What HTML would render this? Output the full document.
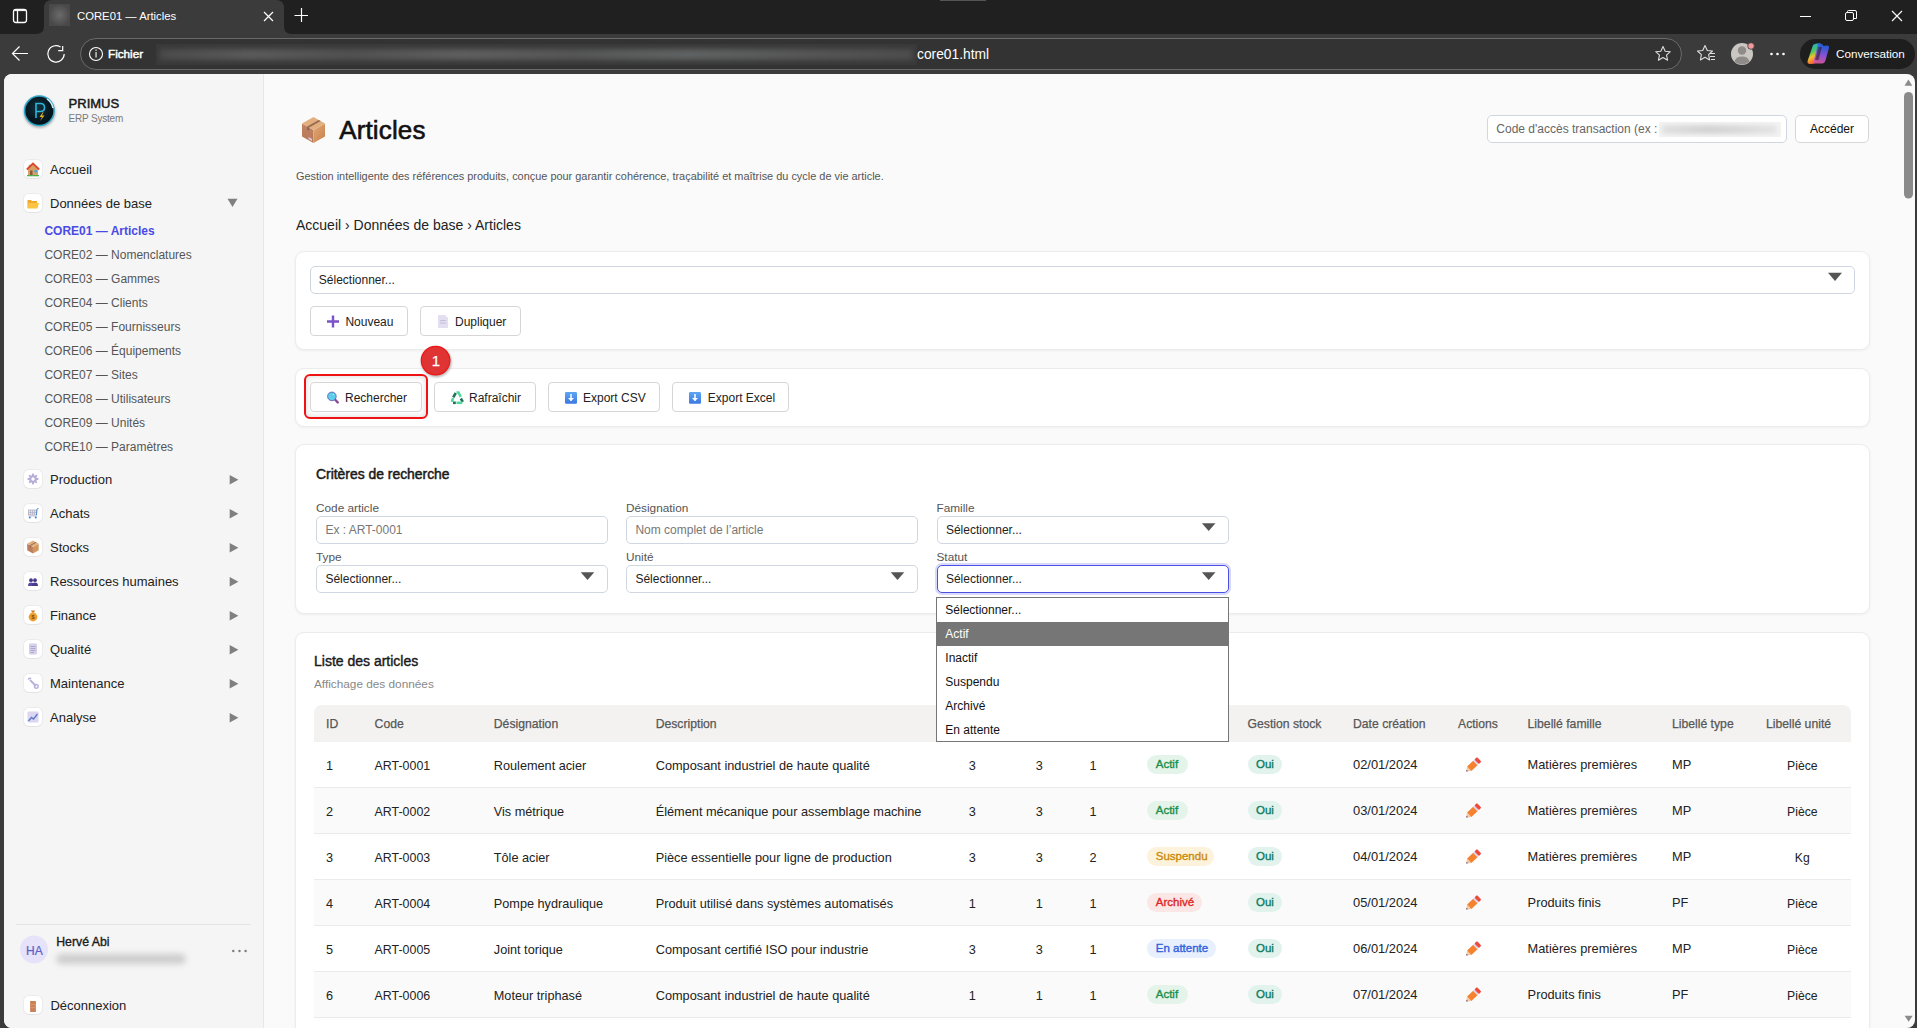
<!DOCTYPE html>
<html><head><meta charset="utf-8">
<style>
*{box-sizing:border-box;margin:0;padding:0}
html,body{width:1917px;height:1028px;overflow:hidden;background:#3b3b3b;font-family:"Liberation Sans",sans-serif;position:relative}
.abs{position:absolute}
.t{position:absolute;white-space:nowrap;line-height:1}
svg{position:absolute;overflow:visible}
</style></head><body>

<div class="abs" style="left:0px;top:0px;width:1917px;height:34px;background:#202020"></div>
<div class="abs" style="left:0px;top:34px;width:1917px;height:40px;background:#3b3b3b"></div>
<svg style="left:0;top:0" width="1917" height="74">
<rect x="13.5" y="9.5" width="13" height="13" rx="2.5" fill="none" stroke="#fff" stroke-width="1.3"/>
<line x1="17.5" y1="10" x2="17.5" y2="22" stroke="#fff" stroke-width="1.3"/><line x1="15" y1="10.6" x2="25" y2="10.6" stroke="#fff" stroke-width="1"/>
<path d="M36 34 Q44 34 44 26 L44 8 Q44 0 52 0 L276 0 Q284 0 284 8 L284 26 Q284 34 292 34 Z" fill="#3b3b3b"/>
<defs><radialGradient id="fav"><stop offset="0" stop-color="#6a6a6a"/><stop offset="1" stop-color="#4a4a4a"/></radialGradient>
<filter id="bl"><feGaussianBlur stdDeviation="0.7"/></filter></defs>
<rect x="49" y="4" width="21" height="22" rx="1" fill="url(#fav)" filter="url(#bl)"/>
<path d="M264 12 L273 21 M273 12 L264 21" stroke="#fff" stroke-width="1.2"/>
<path d="M301.5 8 L301.5 22 M294.5 15.5 L308 15.5" stroke="#fff" stroke-width="1.2"/>
<path d="M1800 16.5 L1811 16.5" stroke="#fff" stroke-width="1"/>
<rect x="1845.5" y="12.5" width="8" height="8" rx="1.5" fill="none" stroke="#fff" stroke-width="1"/>
<path d="M1847.5 12.5 L1847.5 11.5 Q1847.5 10.5 1848.5 10.5 L1855 10.5 Q1856.5 10.5 1856.5 12 L1856.5 18.5 L1854 18.5" fill="none" stroke="#fff" stroke-width="1"/>
<path d="M1892 11 L1902 21 M1902 11 L1892 21" stroke="#fff" stroke-width="1.1"/>
<rect x="940" y="0" width="46" height="1" fill="#555"/>
<g transform="translate(0,34)">
<path d="M12.5 19.5 L28 19.5 M19.5 12.5 L12.5 19.5 L19.5 26.5" fill="none" stroke="#fff" stroke-width="1.2"/>
<path d="M64.2 20 A8.2 8.2 0 1 1 60.5 13" fill="none" stroke="#fff" stroke-width="1.2"/>
<path d="M58.2 16.6 L62.7 16.6 L62.7 12" fill="none" stroke="#fff" stroke-width="1.2"/>
<rect x="80.5" y="4.5" width="1601" height="31" rx="15.5" fill="#333" stroke="#6a6a6a" stroke-width="1"/>
<circle cx="96" cy="20" r="6.5" fill="none" stroke="#fff" stroke-width="1.1"/>
<rect x="95.4" y="18" width="1.3" height="5.5" fill="#ddd"/>
<rect x="95.4" y="15.5" width="1.3" height="1.4" fill="#ddd"/>
<path d="M1663 12.5 L1665.2 17.2 L1670.3 17.7 L1666.5 21.1 L1667.6 26.2 L1663 23.5 L1658.4 26.2 L1659.5 21.1 L1655.7 17.7 L1660.8 17.2 Z" fill="none" stroke="#ddd" stroke-width="1.1" stroke-linejoin="round"/>
<path d="M1705 11.5 L1707.3 16.5 L1712.5 17 L1708.6 20.6 L1709.6 26 L1705 23.3 L1700.4 26 L1701.4 20.6 L1697.5 17 L1702.7 16.5 Z" fill="none" stroke="#ddd" stroke-width="1.1" stroke-linejoin="round"/>
<path d="M1710 19.5 L1715 19.5 M1710 22.5 L1715 22.5 M1711 25.5 L1715 25.5" stroke="#ddd" stroke-width="1.1"/>
<circle cx="1742" cy="20" r="11" fill="#cac6c2"/>
<circle cx="1742" cy="16.5" r="4.2" fill="#8f8b88"/>
<path d="M1734.5 27.8 Q1735.5 22.5 1742 22.5 Q1748.5 22.5 1749.5 27.8 Q1742 33 1734.5 27.8 Z" fill="#8f8b88"/>
<circle cx="1751" cy="12" r="3.3" fill="#f29a9a" stroke="#3b3b3b" stroke-width="0.8"/>
<circle cx="1771.5" cy="20" r="1.3" fill="#fff"/><circle cx="1777.5" cy="20" r="1.3" fill="#fff"/><circle cx="1783.5" cy="20" r="1.3" fill="#fff"/>
<rect x="1800" y="5" width="115" height="30" rx="15" fill="#1e1e1e"/>
<defs>
<linearGradient id="cop" x1="0" y1="0" x2="0.3" y2="1"><stop offset="0" stop-color="#1f9ef5"/><stop offset="0.45" stop-color="#46c85e"/><stop offset="0.7" stop-color="#f2c22c"/><stop offset="1" stop-color="#f2603a"/></linearGradient>
<linearGradient id="cop2" x1="0" y1="0" x2="-0.2" y2="1"><stop offset="0" stop-color="#2a5fe8"/><stop offset="0.5" stop-color="#9b56e0"/><stop offset="1" stop-color="#f05a8a"/></linearGradient>
</defs>
<path d="M1813 11 Q1814.5 9.5 1817 9.5 L1820.5 9.5 L1815.5 27.5 Q1814.8 30 1812 30 L1810 30 Q1807 30 1807.6 27 Z" fill="url(#cop)"/>
<path d="M1823.5 12 Q1822.8 9.5 1820 9.5 L1818 9.5 L1813 29.5 L1822 29.5 Q1824.5 29.5 1825.3 27 L1829 14 Q1829.5 11.5 1827 11.5 Z" fill="url(#cop2)" opacity="0.92"/>
<path d="M1818.5 13 L1822 13 L1818.5 26 L1815 26 Z" fill="#1e1e1e" opacity="0.55"/>
</g>
</svg>
<div class="t" style="left:77px;top:11.18px;font-size:11.3px;color:#fff;font-weight:normal;">CORE01 — Articles</div>
<div class="t" style="left:108px;top:48.10px;font-size:11.7px;color:#fff;font-weight:normal;-webkit-text-stroke:0.45px #fff;">Fichier</div>
<div class="abs" style="left:156px;top:44px;width:761px;height:21px;background:#393939"></div>
<div class="abs" style="left:160px;top:49px;width:753px;height:11px;background:linear-gradient(90deg,#4a4a4a,#5a5a5a 12%,#505050 25%,#5e5e5e 40%,#555 55%,#5f6262 70%,#565656 85%,#4c4c4c);filter:blur(2.5px)"></div>
<div class="t" style="left:917px;top:47.92px;font-size:13.8px;color:#fff;font-weight:normal;">core01.html</div>
<div class="t" style="left:1836px;top:48.10px;font-size:11.7px;color:#fff;font-weight:normal;">Conversation</div>
<div class="abs" style="left:4px;top:74px;width:1911px;height:954px;background:#fafafa;border-radius:8px 8px 8px 8px;overflow:hidden"></div>
<div class="abs" style="left:4px;top:74px;width:260px;height:954px;background:#f5f5f5;border-right:1px solid #e9e7e5;border-radius:8px 0 0 8px"></div>
<svg style="left:0;top:0" width="270" height="1028">
<defs>
<radialGradient id="lg" cx="0.45" cy="0.4" r="0.6"><stop offset="0" stop-color="#123240"/><stop offset="0.7" stop-color="#071820"/><stop offset="1" stop-color="#04121a"/></radialGradient>
<filter id="sh" x="-50%" y="-50%" width="200%" height="200%"><feGaussianBlur stdDeviation="1"/></filter>
</defs>
<circle cx="39.5" cy="112" r="16" fill="#000" opacity="0.25" filter="url(#sh)"/>
<circle cx="39.3" cy="110.8" r="15.5" fill="#2fa8c8"/>
<circle cx="39.3" cy="110.8" r="14" fill="url(#lg)"/>
<path d="M47 99 A14 14 0 0 1 53 108" stroke="#cdeff7" stroke-width="1.5" fill="none"/>
<path d="M36 118 L36 103.5 L40.5 103.5 Q44.5 103.5 44.5 107.5 Q44.5 111.5 40.5 111.5 L36 111.5" fill="none" stroke="#2bb6d8" stroke-width="1.6"/>
<path d="M43 112 L39.5 117 L42 117 L40 121 L44.5 115.5 L42 115.5 L43.5 112 Z" fill="#e8b422"/>
</svg>
<div class="t" style="left:68.6px;top:96.70px;font-size:13px;color:#1a1a1a;font-weight:normal;-webkit-text-stroke:0.5px #1a1a1a;">PRIMUS</div>
<div class="t" style="left:68.6px;top:114.13px;font-size:10px;color:#7a7a7a;font-weight:normal;letter-spacing:-0.2px">ERP System</div>
<div class="abs" style="left:24px;top:160px;width:18px;height:18px;background:#fff;border-radius:5px;box-shadow:0 0 0 1px rgba(0,0,0,0.04),0 1px 1px rgba(0,0,0,0.03)"></div>
<svg style="left:24px;top:160px" width="18" height="18">
<rect x="4.8" y="4.8" width="1.8" height="4" fill="#c89060"/><path d="M4 9 L9 4.5 L14 9 L14 15 L4 15 Z" fill="#d9a066"/>
<path d="M2.8 9.5 L9 3.5 L15.2 9.5" fill="none" stroke="#d84a2f" stroke-width="1.8"/>
<rect x="6" y="10.5" width="2.5" height="4.5" fill="#8a5a3a"/>
<rect x="10.5" y="10" width="2.5" height="2.5" fill="#4aa8e0"/>
<rect x="3" y="15" width="12" height="1.3" fill="#4caf50"/>
</svg>
<div class="t" style="left:50px;top:162.75px;font-size:13px;color:#222;font-weight:normal;">Accueil</div>
<div class="abs" style="left:24px;top:194px;width:18px;height:18px;background:#fff;border-radius:5px;box-shadow:0 0 0 1px rgba(0,0,0,0.04),0 1px 1px rgba(0,0,0,0.03)"></div>
<svg style="left:24px;top:194px" width="18" height="18">
<path d="M3.5 6 L7 6 L8 7 L13 7 L13 14 L3.5 14 Z" fill="#f0a830"/>
<path d="M4.5 9 L15 9 L13.5 14.5 L3.5 14.5 Z" fill="#fcc445"/>
</svg>
<div class="t" style="left:50px;top:196.75px;font-size:13px;color:#222;font-weight:normal;">Données de base</div>
<svg style="left:0;top:0" width="260" height="230"><path d="M227.5 198.8 L237.5 198.8 L232.5 207 Z" fill="#808080"/></svg>
<div class="t" style="left:44.4px;top:224.84px;font-size:12px;color:#4a4ae6;font-weight:bold;">CORE01 — Articles</div>
<div class="t" style="left:44.4px;top:248.84px;font-size:12px;color:#555;font-weight:normal;">CORE02 — Nomenclatures</div>
<div class="t" style="left:44.4px;top:272.84px;font-size:12px;color:#555;font-weight:normal;">CORE03 — Gammes</div>
<div class="t" style="left:44.4px;top:296.84px;font-size:12px;color:#555;font-weight:normal;">CORE04 — Clients</div>
<div class="t" style="left:44.4px;top:320.84px;font-size:12px;color:#555;font-weight:normal;">CORE05 — Fournisseurs</div>
<div class="t" style="left:44.4px;top:344.84px;font-size:12px;color:#555;font-weight:normal;">CORE06 — Équipements</div>
<div class="t" style="left:44.4px;top:368.84px;font-size:12px;color:#555;font-weight:normal;">CORE07 — Sites</div>
<div class="t" style="left:44.4px;top:392.84px;font-size:12px;color:#555;font-weight:normal;">CORE08 — Utilisateurs</div>
<div class="t" style="left:44.4px;top:416.84px;font-size:12px;color:#555;font-weight:normal;">CORE09 — Unités</div>
<div class="t" style="left:44.4px;top:440.84px;font-size:12px;color:#555;font-weight:normal;">CORE10 — Paramètres</div>
<div class="abs" style="left:24px;top:470px;width:18px;height:18px;background:#fff;border-radius:5px;box-shadow:0 0 0 1px rgba(0,0,0,0.04),0 1px 1px rgba(0,0,0,0.03)"></div>
<svg style="left:24px;top:470px" width="18" height="18"><g fill="#b8acd8"><circle cx="9" cy="9" r="3.8"/><rect x="8" y="3.6" width="2" height="10.8" rx="0.6"/><rect x="3.6" y="8" width="10.8" height="2" rx="0.6"/><rect x="8" y="3.6" width="2" height="10.8" rx="0.6" transform="rotate(45 9 9)"/><rect x="8" y="3.6" width="2" height="10.8" rx="0.6" transform="rotate(-45 9 9)"/></g><circle cx="9" cy="9" r="1.7" fill="#fff"/></svg>
<div class="t" style="left:50px;top:472.60px;font-size:13px;color:#222;font-weight:normal;">Production</div>
<svg style="left:0;top:0" width="260" height="1028"><path d="M229.7 475 L229.7 484.5 L238.4 479.75 Z" fill="#808080"/></svg>
<div class="abs" style="left:24px;top:504px;width:18px;height:18px;background:#fff;border-radius:5px;box-shadow:0 0 0 1px rgba(0,0,0,0.04),0 1px 1px rgba(0,0,0,0.03)"></div>
<svg style="left:24px;top:504px" width="18" height="18"><rect x="4.5" y="6" width="8" height="5" fill="#e6e6ee" stroke="#a8a8b8" stroke-width="0.7"/><path d="M6.5 6 L6.5 11 M8.5 6 L8.5 11 M10.5 6 L10.5 11 M4.5 8.5 L12.5 8.5" stroke="#a8a8b8" stroke-width="0.6"/><path d="M12.5 11 L13 5 L14.5 4.5" fill="none" stroke="#3a80d8" stroke-width="0.9"/><path d="M4.5 12 L13 12" stroke="#c0b8d8" stroke-width="0.9"/><circle cx="5.8" cy="13.4" r="1" fill="#3a80d8"/><circle cx="11.8" cy="13.4" r="1" fill="#3a80d8"/></svg>
<div class="t" style="left:50px;top:506.60px;font-size:13px;color:#222;font-weight:normal;">Achats</div>
<svg style="left:0;top:0" width="260" height="1028"><path d="M229.7 509 L229.7 518.5 L238.4 513.75 Z" fill="#808080"/></svg>
<div class="abs" style="left:24px;top:538px;width:18px;height:18px;background:#fff;border-radius:5px;box-shadow:0 0 0 1px rgba(0,0,0,0.04),0 1px 1px rgba(0,0,0,0.03)"></div>
<svg style="left:24px;top:538px" width="18" height="18"><g transform="translate(3.2,2.6) scale(0.5)"><path d="M0 6.5 L11.5 13 L11.5 26 L0 19.5 Z" fill="#bc7e5c"/><path d="M11.5 13 L23 6.5 L23 19.5 L11.5 26 Z" fill="#d4955e"/><path d="M0 6.5 L11.5 0 L23 6.5 L11.5 13 Z" fill="#e2b07e"/><path d="M5.2 9.4 L16.7 2.9 L18.7 4 L7.2 10.5 Z" fill="#9c6a52"/><path d="M5.2 9.4 L7.2 10.5 L7.2 13.8 L5.2 12.7 Z" fill="#8a6458"/></g></svg>
<div class="t" style="left:50px;top:540.60px;font-size:13px;color:#222;font-weight:normal;">Stocks</div>
<svg style="left:0;top:0" width="260" height="1028"><path d="M229.7 543 L229.7 552.5 L238.4 547.75 Z" fill="#808080"/></svg>
<div class="abs" style="left:24px;top:572px;width:18px;height:18px;background:#fff;border-radius:5px;box-shadow:0 0 0 1px rgba(0,0,0,0.04),0 1px 1px rgba(0,0,0,0.03)"></div>
<svg style="left:24px;top:572px" width="18" height="18"><circle cx="7" cy="8.2" r="1.9" fill="#4a3a8a"/><circle cx="11" cy="8.2" r="1.9" fill="#4a3a8a"/><path d="M4 14 Q4 10.6 7 10.6 Q10 10.6 10 14 Z" fill="#5a48a0"/><path d="M8 14 Q8 10.6 11 10.6 Q14 10.6 14 14 Z" fill="#4a3a8a"/></svg>
<div class="t" style="left:50px;top:574.60px;font-size:13px;color:#222;font-weight:normal;">Ressources humaines</div>
<svg style="left:0;top:0" width="260" height="1028"><path d="M229.7 577 L229.7 586.5 L238.4 581.75 Z" fill="#808080"/></svg>
<div class="abs" style="left:24px;top:606px;width:18px;height:18px;background:#fff;border-radius:5px;box-shadow:0 0 0 1px rgba(0,0,0,0.04),0 1px 1px rgba(0,0,0,0.03)"></div>
<svg style="left:24px;top:606px" width="18" height="18"><path d="M7 4.5 L11 4.5 L10 6.5 L8 6.5 Z" fill="#c87a20"/><circle cx="9" cy="11" r="4.4" fill="#f0a030"/><text x="9" y="13.2" font-size="6" text-anchor="middle" fill="#7a4a10" font-family="Liberation Sans" font-weight="bold">$</text></svg>
<div class="t" style="left:50px;top:608.60px;font-size:13px;color:#222;font-weight:normal;">Finance</div>
<svg style="left:0;top:0" width="260" height="1028"><path d="M229.7 611 L229.7 620.5 L238.4 615.75 Z" fill="#808080"/></svg>
<div class="abs" style="left:24px;top:640px;width:18px;height:18px;background:#fff;border-radius:5px;box-shadow:0 0 0 1px rgba(0,0,0,0.04),0 1px 1px rgba(0,0,0,0.03)"></div>
<svg style="left:24px;top:640px" width="18" height="18"><rect x="5" y="3.5" width="8" height="11" rx="1" fill="#d6d0ea"/><path d="M6.5 6.5 L11.5 6.5 M6.5 8.5 L11.5 8.5 M6.5 10.5 L11.5 10.5 M6.5 12.5 L10 12.5" stroke="#a89cc8" stroke-width="0.8"/></svg>
<div class="t" style="left:50px;top:642.60px;font-size:13px;color:#222;font-weight:normal;">Qualité</div>
<svg style="left:0;top:0" width="260" height="1028"><path d="M229.7 645 L229.7 654.5 L238.4 649.75 Z" fill="#808080"/></svg>
<div class="abs" style="left:24px;top:674px;width:18px;height:18px;background:#fff;border-radius:5px;box-shadow:0 0 0 1px rgba(0,0,0,0.04),0 1px 1px rgba(0,0,0,0.03)"></div>
<svg style="left:24px;top:674px" width="18" height="18"><path d="M6.5 6.5 L11.5 11.5" stroke="#b8b0d8" stroke-width="1.8" stroke-linecap="round"/><path d="M4.2 5.5 A2.3 2.3 0 0 1 7.2 4.6" fill="none" stroke="#b8b0d8" stroke-width="1.5"/><circle cx="12.3" cy="12.3" r="1.9" fill="none" stroke="#b8b0d8" stroke-width="1.4"/></svg>
<div class="t" style="left:50px;top:676.60px;font-size:13px;color:#222;font-weight:normal;">Maintenance</div>
<svg style="left:0;top:0" width="260" height="1028"><path d="M229.7 679 L229.7 688.5 L238.4 683.75 Z" fill="#808080"/></svg>
<div class="abs" style="left:24px;top:708px;width:18px;height:18px;background:#fff;border-radius:5px;box-shadow:0 0 0 1px rgba(0,0,0,0.04),0 1px 1px rgba(0,0,0,0.03)"></div>
<svg style="left:24px;top:708px" width="18" height="18"><rect x="3.5" y="3.5" width="11" height="11" rx="1" fill="#dcd6f0"/><path d="M4.5 13 L7.5 9.5 L9.5 11 L13.5 6" fill="none" stroke="#5a78c8" stroke-width="1.3"/></svg>
<div class="t" style="left:50px;top:710.60px;font-size:13px;color:#222;font-weight:normal;">Analyse</div>
<svg style="left:0;top:0" width="260" height="1028"><path d="M229.7 713 L229.7 722.5 L238.4 717.75 Z" fill="#808080"/></svg>
<div class="abs" style="left:16px;top:924px;width:235px;height:1px;background:#e4e4e4"></div>
<svg style="left:0;top:0" width="260" height="1028"><circle cx="34" cy="949.5" r="14" fill="#e6e2fa"/><circle cx="233.3" cy="951" r="1.2" fill="#7a7a7a"/><circle cx="239.5" cy="951" r="1.2" fill="#7a7a7a"/><circle cx="245.6" cy="951" r="1.2" fill="#7a7a7a"/></svg>
<div class="t" style="left:-165.7px;width:400px;text-align:center;top:944.64px;font-size:12px;color:#5b5fc7;font-weight:normal;-webkit-text-stroke:0.2px #5b5fc7">HA</div>
<div class="t" style="left:56.2px;top:935.59px;font-size:12.3px;color:#1a1a1a;font-weight:normal;-webkit-text-stroke:0.35px #1a1a1a;">Hervé Abi</div>
<div class="abs" style="left:56px;top:954px;width:130px;height:10px;background:#c8c8c8;filter:blur(3px);border-radius:5px;opacity:0.9"></div>
<div class="abs" style="left:24px;top:996px;width:18px;height:18px;background:#fff;border-radius:5px;box-shadow:0 0 0 1px rgba(0,0,0,0.04),0 1px 1px rgba(0,0,0,0.03)"></div>
<svg style="left:24px;top:996px" width="18" height="18"><rect x="6.1" y="5" width="5.8" height="11" fill="#c9825a"/><path d="M6.1 8.5 L11.9 8.5 M6.1 11.5 L11.9 11.5" stroke="#e49a6c" stroke-width="0.7"/><rect x="11.3" y="9" width="0.6" height="1" fill="#f0b030"/></svg>
<div class="t" style="left:50.4px;top:998.50px;font-size:13px;color:#222;font-weight:normal;">Déconnexion</div>
<svg style="left:302px;top:117px" width="24" height="26">
<defs>
<linearGradient id="bxl" x1="0" y1="0" x2="0" y2="1"><stop offset="0" stop-color="#c08462"/><stop offset="1" stop-color="#b87858"/></linearGradient>
<linearGradient id="bxr" x1="0" y1="0" x2="1" y2="1"><stop offset="0" stop-color="#e0a978"/><stop offset="1" stop-color="#c88048"/></linearGradient>
</defs>
<path d="M0 6.5 L11.5 13 L11.5 26 L0 19.5 Z" fill="url(#bxl)"/>
<path d="M11.5 13 L23 6.5 L23 19.5 L11.5 26 Z" fill="url(#bxr)"/>
<path d="M0 6.5 L11.5 0 L23 6.5 L11.5 13 Z" fill="#e2b07e"/>
<path d="M5.2 9.4 L16.7 2.9 L18.7 4 L7.2 10.5 Z" fill="#9c6a52"/>
<path d="M5.2 9.4 L7.2 10.5 L7.2 13.8 L5.2 12.7 Z" fill="#8a6458"/>
<path d="M6.5 20 L10 22 L10 24 L6.5 22 Z" fill="#d8cce8"/>
</svg>
<div class="t" style="left:339.2px;top:116.74px;font-size:26px;color:#111;font-weight:normal;letter-spacing:0.15px;-webkit-text-stroke:0.6px #111">Articles</div>
<div class="t" style="left:296px;top:170.75px;font-size:10.93px;color:#555;font-weight:normal;">Gestion intelligente des références produits, conçue pour garantir cohérence, traçabilité et maîtrise du cycle de vie article.</div>
<div class="t" style="left:296px;top:217.85px;font-size:14px;color:#222;font-weight:normal;">Accueil › Données de base › Articles</div>
<div class="abs" style="left:1487px;top:115px;width:300px;height:28px;background:#fff;border:1px solid #d0d7e0;border-radius:5px"></div>
<div class="t" style="left:1496.3px;top:122.94px;font-size:12px;color:#666;font-weight:normal;">Code d'accès transaction (ex :</div>
<div class="abs" style="left:1659px;top:122px;width:122px;height:15px;background:#f4f4f4"></div>
<div class="abs" style="left:1662px;top:125px;width:115px;height:9px;background:linear-gradient(90deg,#e0e0e0,#d2d2d2 40%,#dadada 70%,#e4e4e4);filter:blur(2px)"></div>
<div class="abs" style="left:1795px;top:115px;width:74px;height:28px;background:#fff;border:1px solid #d8d8d8;border-radius:5px"></div>
<div class="t" style="left:1810px;top:122.94px;font-size:12px;color:#111;font-weight:normal;">Accéder</div>
<svg style="left:0;top:0" width="1917" height="1028">
<path d="M1904.5 85.7 L1912.3 85.7 L1908.4 79.4 Z" fill="#8a8a8a"/>
<rect x="1904" y="92" width="9" height="106.5" rx="4.5" fill="#8a8a8a"/>
<path d="M1904.6 1015.7 L1912.7 1015.7 L1908.65 1021.7 Z" fill="#8a8a8a"/>
</svg>
<div class="abs" style="left:295px;top:251px;width:1575px;height:99px;background:#fff;border:1px solid #ececec;border-radius:9px;box-shadow:0 1px 3px rgba(0,0,0,0.05)"></div>
<div class="abs" style="left:310px;top:266px;width:1545px;height:28px;background:#fff;border:1px solid #cfd6e0;border-radius:5px"></div>
<div class="t" style="left:318.8px;top:273.84px;font-size:12px;color:#222;font-weight:normal;">Sélectionner...</div>
<svg style="left:0;top:0" width="1917" height="1028"><path d="M1828 272.8 L1842 272.8 L1835 281 Z" fill="#555"/></svg>
<div class="abs" style="left:310px;top:306px;width:98px;height:30px;background:#fff;border:1px solid #d6d6d6;border-radius:4px"></div>
<svg style="left:0;top:0" width="600" height="400"><path d="M333 315.5 L333 327.5 M327 321.5 L339 321.5" stroke="#7b52c8" stroke-width="2.4"/></svg>
<div class="t" style="left:345.4px;top:316.14px;font-size:12px;color:#222;font-weight:normal;">Nouveau</div>
<div class="abs" style="left:420px;top:306px;width:101px;height:30px;background:#fff;border:1px solid #d6d6d6;border-radius:4px"></div>
<svg style="left:0;top:0" width="600" height="400"><path d="M438 315 L445 315 L448 318 L448 328 L438 328 Z" fill="#e4dff0"/><path d="M440 320.5 L446 320.5 M440 323 L446 323" stroke="#b8b0d0" stroke-width="0.7"/></svg>
<div class="t" style="left:455px;top:316.14px;font-size:12px;color:#222;font-weight:normal;">Dupliquer</div>
<div class="abs" style="left:295px;top:367.5px;width:1575px;height:59.5px;background:#fff;border:1px solid #ececec;border-radius:9px;box-shadow:0 1px 3px rgba(0,0,0,0.05)"></div>
<div class="abs" style="left:303.5px;top:373.8px;width:124.5px;height:45.4px;border:2px solid #f01212;border-radius:6px;box-shadow:inset 0 0 6px rgba(0,0,0,0.16)"></div>
<div class="abs" style="left:310px;top:382px;width:112px;height:30px;background:#fff;border:1px solid #d6d6d6;border-radius:4px"></div>
<svg style="left:0;top:0" width="900" height="450">
<path d="M334.5 399 L337.8 402.5" stroke="#8a4a92" stroke-width="2.4" stroke-linecap="round"/>
<circle cx="331.9" cy="396.4" r="4.3" fill="#5dcfea" stroke="#5a62b8" stroke-width="0.9"/>
<circle cx="333.5" cy="394.5" r="0.6" fill="#d8f4fb"/>
</svg>
<div class="t" style="left:345px;top:392.24px;font-size:12px;color:#222;font-weight:normal;">Rechercher</div>
<div class="abs" style="left:434px;top:382px;width:102px;height:30px;background:#fff;border:1px solid #d6d6d6;border-radius:4px"></div>
<svg style="left:0;top:0" width="900" height="450">
<g stroke-width="2.6" stroke-linecap="butt" fill="none">
<path d="M453.2 397.3 L455.8 393" stroke="#1f6e5e"/>
<path d="M456.5 392.5 L458.5 392.5 L460.8 396.8" stroke="#4fd89a"/>
<path d="M460.8 398.5 L462.8 401.8" stroke="#1f6e5e"/>
<path d="M462.3 402.8 L456.5 402.8" stroke="#4fd89a"/>
<path d="M455.8 402.8 L453 402.8" stroke="#1f6e5e"/>
<path d="M452 401.8 L453 398" stroke="#4fd89a"/>
</g>
</svg>
<div class="t" style="left:469px;top:392.24px;font-size:12px;color:#222;font-weight:normal;">Rafraîchir</div>
<div class="abs" style="left:548px;top:382px;width:112px;height:30px;background:#fff;border:1px solid #d6d6d6;border-radius:4px"></div>
<svg style="left:0;top:0" width="900" height="450">
<defs><linearGradient id="dl" x1="0" y1="0" x2="0" y2="1"><stop offset="0" stop-color="#5ea6f2"/><stop offset="1" stop-color="#3b78e2"/></linearGradient></defs>
<rect x="565" y="392" width="12" height="11.8" rx="1.2" fill="url(#dl)"/>
<path d="M571 394 L571 400.5" stroke="#fff" stroke-width="1.5"/><path d="M568 398 L571 401.3 L574 398 Z" fill="#fff"/>
</svg>
<div class="t" style="left:583px;top:392.24px;font-size:12px;color:#222;font-weight:normal;">Export CSV</div>
<div class="abs" style="left:672px;top:382px;width:117px;height:30px;background:#fff;border:1px solid #d6d6d6;border-radius:4px"></div>
<div class="t" style="left:707.8px;top:392.24px;font-size:12px;color:#222;font-weight:normal;">Export Excel</div>
<svg style="left:0;top:0" width="900" height="450"><rect x="689" y="392" width="12" height="11.8" rx="1.2" fill="url(#dl)"/>
<path d="M695 394 L695 400.5" stroke="#fff" stroke-width="1.5"/><path d="M692 398 L695 401.3 L698 398 Z" fill="#fff"/></svg>
<svg style="left:0;top:0" width="900" height="450">
<circle cx="436.3" cy="362" r="15.2" fill="#000" opacity="0.28" filter="url(#sh)"/>
<circle cx="435.6" cy="360.6" r="14.3" fill="#e03434" stroke="#f01616" stroke-width="1.2"/>
</svg>
<div class="t" style="left:235.8px;width:400px;text-align:center;top:353.30px;font-size:15px;color:#fff;font-weight:normal;-webkit-text-stroke:0.25px #fff">1</div>
<div class="abs" style="left:295px;top:443.5px;width:1575px;height:170px;background:#fff;border:1px solid #ececec;border-radius:9px;box-shadow:0 1px 3px rgba(0,0,0,0.05)"></div>
<div class="t" style="left:316px;top:468.23px;font-size:13.9px;color:#1a1a1a;font-weight:normal;-webkit-text-stroke:0.5px #1a1a1a;">Critères de recherche</div>
<div class="t" style="left:316px;top:502.51px;font-size:11.8px;color:#555;font-weight:normal;">Code article</div>
<div class="abs" style="left:316px;top:516px;width:292px;height:28px;background:#fff;border:1px solid #d0d7e0;border-radius:5px"></div>
<div class="t" style="left:325.4px;top:523.84px;font-size:12px;color:#777;font-weight:normal;">Ex : ART-0001</div>
<div class="t" style="left:626px;top:502.51px;font-size:11.8px;color:#555;font-weight:normal;">Désignation</div>
<div class="abs" style="left:626px;top:516px;width:292px;height:28px;background:#fff;border:1px solid #d0d7e0;border-radius:5px"></div>
<div class="t" style="left:635.4px;top:523.84px;font-size:12px;color:#777;font-weight:normal;">Nom complet de l’article</div>
<div class="t" style="left:936.5px;top:502.51px;font-size:11.8px;color:#555;font-weight:normal;">Famille</div>
<div class="abs" style="left:936.5px;top:516px;width:292px;height:28px;background:#fff;border:1px solid #d0d7e0;border-radius:5px"></div>
<div class="t" style="left:945.9px;top:523.54px;font-size:12px;color:#222;font-weight:normal;">Sélectionner...</div>
<svg style="left:0;top:0" width="1917" height="1028"><path d="M1201.9 523.3 L1215.5 523.3 L1208.7 531 Z" fill="#555"/></svg>
<div class="t" style="left:316px;top:551.51px;font-size:11.8px;color:#555;font-weight:normal;">Type</div>
<div class="abs" style="left:316px;top:565px;width:292px;height:28px;background:#fff;border:1px solid #d0d7e0;border-radius:5px"></div>
<div class="t" style="left:325.4px;top:572.54px;font-size:12px;color:#222;font-weight:normal;">Sélectionner...</div>
<svg style="left:0;top:0" width="1917" height="1028"><path d="M580.7 572.3 L594.3 572.3 L587.5 580 Z" fill="#555"/></svg>
<div class="t" style="left:626px;top:551.51px;font-size:11.8px;color:#555;font-weight:normal;">Unité</div>
<div class="abs" style="left:626px;top:565px;width:292px;height:28px;background:#fff;border:1px solid #d0d7e0;border-radius:5px"></div>
<div class="t" style="left:635.4px;top:572.54px;font-size:12px;color:#222;font-weight:normal;">Sélectionner...</div>
<svg style="left:0;top:0" width="1917" height="1028"><path d="M890.7 572.3 L904.3 572.3 L897.5 580 Z" fill="#555"/></svg>
<div class="t" style="left:936.5px;top:551.51px;font-size:11.8px;color:#555;font-weight:normal;">Statut</div>
<div class="abs" style="left:936.5px;top:565px;width:292px;height:28px;background:#fff;border:1.2px solid #4a4fe6;border-radius:5px;box-shadow:0 0 0 2px #d9dafa"></div>
<div class="t" style="left:945.9px;top:572.54px;font-size:12px;color:#222;font-weight:normal;">Sélectionner...</div>
<svg style="left:0;top:0" width="1917" height="1028"><path d="M1201.9 572.3 L1215.5 572.3 L1208.7 580 Z" fill="#555"/></svg>
<div class="abs" style="left:295px;top:632px;width:1575px;height:420px;background:#fff;border:1px solid #ececec;border-radius:9px;box-shadow:0 1px 3px rgba(0,0,0,0.05)"></div>
<div class="t" style="left:314px;top:654.45px;font-size:14px;color:#1a1a1a;font-weight:normal;-webkit-text-stroke:0.4px #1a1a1a;">Liste des articles</div>
<div class="t" style="left:314px;top:679.41px;font-size:11.8px;color:#888;font-weight:normal;">Affichage des données</div>
<div class="abs" style="left:314px;top:705px;width:1537px;height:37px;background:#f3f2f1;border-radius:8px 8px 0 0"></div>
<div class="t" style="left:326px;top:718.27px;font-size:12.2px;color:#575757;font-weight:normal;-webkit-text-stroke:0.25px #575757;">ID</div>
<div class="t" style="left:374.6px;top:718.27px;font-size:12.2px;color:#575757;font-weight:normal;-webkit-text-stroke:0.25px #575757;">Code</div>
<div class="t" style="left:493.8px;top:718.27px;font-size:12.2px;color:#575757;font-weight:normal;-webkit-text-stroke:0.25px #575757;">Désignation</div>
<div class="t" style="left:655.7px;top:718.27px;font-size:12.2px;color:#575757;font-weight:normal;-webkit-text-stroke:0.25px #575757;">Description</div>
<div class="t" style="left:955px;top:718.27px;font-size:12.2px;color:#575757;font-weight:normal;-webkit-text-stroke:0.25px #575757;">Qté min</div>
<div class="t" style="left:1025px;top:718.27px;font-size:12.2px;color:#575757;font-weight:normal;-webkit-text-stroke:0.25px #575757;">Qté max</div>
<div class="t" style="left:1080px;top:718.27px;font-size:12.2px;color:#575757;font-weight:normal;-webkit-text-stroke:0.25px #575757;">Lot</div>
<div class="t" style="left:1147px;top:718.27px;font-size:12.2px;color:#575757;font-weight:normal;-webkit-text-stroke:0.25px #575757;">Statut</div>
<div class="t" style="left:1247.6px;top:718.27px;font-size:12.2px;color:#575757;font-weight:normal;-webkit-text-stroke:0.25px #575757;">Gestion stock</div>
<div class="t" style="left:1353px;top:718.27px;font-size:12.2px;color:#575757;font-weight:normal;-webkit-text-stroke:0.25px #575757;">Date création</div>
<div class="t" style="left:1458px;top:718.27px;font-size:12.2px;color:#575757;font-weight:normal;-webkit-text-stroke:0.25px #575757;">Actions</div>
<div class="t" style="left:1527.6px;top:718.27px;font-size:12.2px;color:#575757;font-weight:normal;-webkit-text-stroke:0.25px #575757;">Libellé famille</div>
<div class="t" style="left:1672px;top:718.27px;font-size:12.2px;color:#575757;font-weight:normal;-webkit-text-stroke:0.25px #575757;">Libellé type</div>
<div class="t" style="left:1766px;top:718.27px;font-size:12.2px;color:#575757;font-weight:normal;-webkit-text-stroke:0.25px #575757;">Libellé unité</div>
<div class="abs" style="left:314px;top:742px;width:1537px;height:46px;background:#fff;border-bottom:1px solid #ebebeb"></div>
<div class="t" style="left:326px;top:759.55px;font-size:12.7px;color:#222;font-weight:normal;">1</div>
<div class="t" style="left:374.6px;top:759.80px;font-size:12.4px;color:#222;font-weight:normal;">ART-0001</div>
<div class="t" style="left:493.8px;top:759.55px;font-size:12.7px;color:#222;font-weight:normal;">Roulement acier</div>
<div class="t" style="left:655.7px;top:759.51px;font-size:12.75px;color:#222;font-weight:normal;">Composant industriel de haute qualité</div>
<div class="t" style="left:772.2px;width:400px;text-align:center;top:759.55px;font-size:12.7px;color:#222;font-weight:normal;">3</div>
<div class="t" style="left:839.4000000000001px;width:400px;text-align:center;top:759.55px;font-size:12.7px;color:#222;font-weight:normal;">3</div>
<div class="t" style="left:893px;width:400px;text-align:center;top:759.55px;font-size:12.7px;color:#222;font-weight:normal;">1</div>
<div class="abs" style="left:1147px;top:755px;width:41px;height:19px;background:#e5f4ea;border-radius:10px"></div>
<div class="t" style="left:1155.75px;top:759.47px;font-size:11.5px;color:#1a8f47;font-weight:normal;-webkit-text-stroke:0.35px #1a8f47;">Actif</div>
<div class="abs" style="left:1248px;top:755px;width:34px;height:19px;background:#e1f3ec;border-radius:10px"></div>
<div class="t" style="left:1256px;top:759.47px;font-size:11.5px;color:#0f7a5f;font-weight:normal;-webkit-text-stroke:0.35px #0f7a5f;">Oui</div>
<div class="t" style="left:1353px;top:759.38px;font-size:12.9px;color:#222;font-weight:normal;">02/01/2024</div>
<svg style="left:0;top:0" width="1917" height="1028"><g transform="translate(1466.2,771.6) rotate(-43.4)">
<path d="M0 0 L4.2 -3 L4.2 3 Z" fill="#f2c9a0"/>
<path d="M0 0 L1.5 -1.1 L1.5 1.1 Z" fill="#6a3a6a"/>
<rect x="4.2" y="-3.1" width="8.4" height="6.2" fill="#f5822e"/>
<rect x="12.6" y="-3.1" width="1.7" height="6.2" fill="#d8d4f0"/>
<rect x="14.3" y="-3.2" width="3.6" height="6.4" rx="1" fill="#f04a3c"/>
</g></svg>
<div class="t" style="left:1527.6px;top:759.46px;font-size:12.8px;color:#222;font-weight:normal;">Matières premières</div>
<div class="t" style="left:1672px;top:759.46px;font-size:12.8px;color:#222;font-weight:normal;">MP</div>
<div class="t" style="left:1602.3px;width:400px;text-align:center;top:759.97px;font-size:12.2px;color:#222;font-weight:normal;">Pièce</div>
<div class="abs" style="left:314px;top:788px;width:1537px;height:46px;background:#fafafa;border-bottom:1px solid #ebebeb"></div>
<div class="t" style="left:326px;top:805.55px;font-size:12.7px;color:#222;font-weight:normal;">2</div>
<div class="t" style="left:374.6px;top:805.80px;font-size:12.4px;color:#222;font-weight:normal;">ART-0002</div>
<div class="t" style="left:493.8px;top:805.55px;font-size:12.7px;color:#222;font-weight:normal;">Vis métrique</div>
<div class="t" style="left:655.7px;top:805.51px;font-size:12.75px;color:#222;font-weight:normal;">Élément mécanique pour assemblage machine</div>
<div class="t" style="left:772.2px;width:400px;text-align:center;top:805.55px;font-size:12.7px;color:#222;font-weight:normal;">3</div>
<div class="t" style="left:839.4000000000001px;width:400px;text-align:center;top:805.55px;font-size:12.7px;color:#222;font-weight:normal;">3</div>
<div class="t" style="left:893px;width:400px;text-align:center;top:805.55px;font-size:12.7px;color:#222;font-weight:normal;">1</div>
<div class="abs" style="left:1147px;top:801px;width:41px;height:19px;background:#e5f4ea;border-radius:10px"></div>
<div class="t" style="left:1155.75px;top:805.47px;font-size:11.5px;color:#1a8f47;font-weight:normal;-webkit-text-stroke:0.35px #1a8f47;">Actif</div>
<div class="abs" style="left:1248px;top:801px;width:34px;height:19px;background:#e1f3ec;border-radius:10px"></div>
<div class="t" style="left:1256px;top:805.47px;font-size:11.5px;color:#0f7a5f;font-weight:normal;-webkit-text-stroke:0.35px #0f7a5f;">Oui</div>
<div class="t" style="left:1353px;top:805.38px;font-size:12.9px;color:#222;font-weight:normal;">03/01/2024</div>
<svg style="left:0;top:0" width="1917" height="1028"><g transform="translate(1466.2,817.6) rotate(-43.4)">
<path d="M0 0 L4.2 -3 L4.2 3 Z" fill="#f2c9a0"/>
<path d="M0 0 L1.5 -1.1 L1.5 1.1 Z" fill="#6a3a6a"/>
<rect x="4.2" y="-3.1" width="8.4" height="6.2" fill="#f5822e"/>
<rect x="12.6" y="-3.1" width="1.7" height="6.2" fill="#d8d4f0"/>
<rect x="14.3" y="-3.2" width="3.6" height="6.4" rx="1" fill="#f04a3c"/>
</g></svg>
<div class="t" style="left:1527.6px;top:805.46px;font-size:12.8px;color:#222;font-weight:normal;">Matières premières</div>
<div class="t" style="left:1672px;top:805.46px;font-size:12.8px;color:#222;font-weight:normal;">MP</div>
<div class="t" style="left:1602.3px;width:400px;text-align:center;top:805.97px;font-size:12.2px;color:#222;font-weight:normal;">Pièce</div>
<div class="abs" style="left:314px;top:834px;width:1537px;height:46px;background:#fff;border-bottom:1px solid #ebebeb"></div>
<div class="t" style="left:326px;top:851.55px;font-size:12.7px;color:#222;font-weight:normal;">3</div>
<div class="t" style="left:374.6px;top:851.80px;font-size:12.4px;color:#222;font-weight:normal;">ART-0003</div>
<div class="t" style="left:493.8px;top:851.55px;font-size:12.7px;color:#222;font-weight:normal;">Tôle acier</div>
<div class="t" style="left:655.7px;top:851.51px;font-size:12.75px;color:#222;font-weight:normal;">Pièce essentielle pour ligne de production</div>
<div class="t" style="left:772.2px;width:400px;text-align:center;top:851.55px;font-size:12.7px;color:#222;font-weight:normal;">3</div>
<div class="t" style="left:839.4000000000001px;width:400px;text-align:center;top:851.55px;font-size:12.7px;color:#222;font-weight:normal;">3</div>
<div class="t" style="left:893px;width:400px;text-align:center;top:851.55px;font-size:12.7px;color:#222;font-weight:normal;">2</div>
<div class="abs" style="left:1147px;top:847px;width:67px;height:19px;background:#fdf3dc;border-radius:10px"></div>
<div class="t" style="left:1155.75px;top:851.47px;font-size:11.5px;color:#c98a0c;font-weight:normal;-webkit-text-stroke:0.35px #c98a0c;">Suspendu</div>
<div class="abs" style="left:1248px;top:847px;width:34px;height:19px;background:#e1f3ec;border-radius:10px"></div>
<div class="t" style="left:1256px;top:851.47px;font-size:11.5px;color:#0f7a5f;font-weight:normal;-webkit-text-stroke:0.35px #0f7a5f;">Oui</div>
<div class="t" style="left:1353px;top:851.38px;font-size:12.9px;color:#222;font-weight:normal;">04/01/2024</div>
<svg style="left:0;top:0" width="1917" height="1028"><g transform="translate(1466.2,863.6) rotate(-43.4)">
<path d="M0 0 L4.2 -3 L4.2 3 Z" fill="#f2c9a0"/>
<path d="M0 0 L1.5 -1.1 L1.5 1.1 Z" fill="#6a3a6a"/>
<rect x="4.2" y="-3.1" width="8.4" height="6.2" fill="#f5822e"/>
<rect x="12.6" y="-3.1" width="1.7" height="6.2" fill="#d8d4f0"/>
<rect x="14.3" y="-3.2" width="3.6" height="6.4" rx="1" fill="#f04a3c"/>
</g></svg>
<div class="t" style="left:1527.6px;top:851.46px;font-size:12.8px;color:#222;font-weight:normal;">Matières premières</div>
<div class="t" style="left:1672px;top:851.46px;font-size:12.8px;color:#222;font-weight:normal;">MP</div>
<div class="t" style="left:1602.3px;width:400px;text-align:center;top:851.97px;font-size:12.2px;color:#222;font-weight:normal;">Kg</div>
<div class="abs" style="left:314px;top:880px;width:1537px;height:46px;background:#fafafa;border-bottom:1px solid #ebebeb"></div>
<div class="t" style="left:326px;top:897.55px;font-size:12.7px;color:#222;font-weight:normal;">4</div>
<div class="t" style="left:374.6px;top:897.80px;font-size:12.4px;color:#222;font-weight:normal;">ART-0004</div>
<div class="t" style="left:493.8px;top:897.55px;font-size:12.7px;color:#222;font-weight:normal;">Pompe hydraulique</div>
<div class="t" style="left:655.7px;top:897.51px;font-size:12.75px;color:#222;font-weight:normal;">Produit utilisé dans systèmes automatisés</div>
<div class="t" style="left:772.2px;width:400px;text-align:center;top:897.55px;font-size:12.7px;color:#222;font-weight:normal;">1</div>
<div class="t" style="left:839.4000000000001px;width:400px;text-align:center;top:897.55px;font-size:12.7px;color:#222;font-weight:normal;">1</div>
<div class="t" style="left:893px;width:400px;text-align:center;top:897.55px;font-size:12.7px;color:#222;font-weight:normal;">1</div>
<div class="abs" style="left:1147px;top:893px;width:55px;height:19px;background:#fce7e7;border-radius:10px"></div>
<div class="t" style="left:1155.75px;top:897.47px;font-size:11.5px;color:#dc2626;font-weight:normal;-webkit-text-stroke:0.35px #dc2626;">Archivé</div>
<div class="abs" style="left:1248px;top:893px;width:34px;height:19px;background:#e1f3ec;border-radius:10px"></div>
<div class="t" style="left:1256px;top:897.47px;font-size:11.5px;color:#0f7a5f;font-weight:normal;-webkit-text-stroke:0.35px #0f7a5f;">Oui</div>
<div class="t" style="left:1353px;top:897.38px;font-size:12.9px;color:#222;font-weight:normal;">05/01/2024</div>
<svg style="left:0;top:0" width="1917" height="1028"><g transform="translate(1466.2,909.6) rotate(-43.4)">
<path d="M0 0 L4.2 -3 L4.2 3 Z" fill="#f2c9a0"/>
<path d="M0 0 L1.5 -1.1 L1.5 1.1 Z" fill="#6a3a6a"/>
<rect x="4.2" y="-3.1" width="8.4" height="6.2" fill="#f5822e"/>
<rect x="12.6" y="-3.1" width="1.7" height="6.2" fill="#d8d4f0"/>
<rect x="14.3" y="-3.2" width="3.6" height="6.4" rx="1" fill="#f04a3c"/>
</g></svg>
<div class="t" style="left:1527.6px;top:897.46px;font-size:12.8px;color:#222;font-weight:normal;">Produits finis</div>
<div class="t" style="left:1672px;top:897.46px;font-size:12.8px;color:#222;font-weight:normal;">PF</div>
<div class="t" style="left:1602.3px;width:400px;text-align:center;top:897.97px;font-size:12.2px;color:#222;font-weight:normal;">Pièce</div>
<div class="abs" style="left:314px;top:926px;width:1537px;height:46px;background:#fff;border-bottom:1px solid #ebebeb"></div>
<div class="t" style="left:326px;top:943.55px;font-size:12.7px;color:#222;font-weight:normal;">5</div>
<div class="t" style="left:374.6px;top:943.80px;font-size:12.4px;color:#222;font-weight:normal;">ART-0005</div>
<div class="t" style="left:493.8px;top:943.55px;font-size:12.7px;color:#222;font-weight:normal;">Joint torique</div>
<div class="t" style="left:655.7px;top:943.51px;font-size:12.75px;color:#222;font-weight:normal;">Composant certifié ISO pour industrie</div>
<div class="t" style="left:772.2px;width:400px;text-align:center;top:943.55px;font-size:12.7px;color:#222;font-weight:normal;">3</div>
<div class="t" style="left:839.4000000000001px;width:400px;text-align:center;top:943.55px;font-size:12.7px;color:#222;font-weight:normal;">3</div>
<div class="t" style="left:893px;width:400px;text-align:center;top:943.55px;font-size:12.7px;color:#222;font-weight:normal;">1</div>
<div class="abs" style="left:1147px;top:939px;width:69px;height:19px;background:#e8effd;border-radius:10px"></div>
<div class="t" style="left:1155.75px;top:943.47px;font-size:11.5px;color:#2f5fe0;font-weight:normal;-webkit-text-stroke:0.35px #2f5fe0;">En attente</div>
<div class="abs" style="left:1248px;top:939px;width:34px;height:19px;background:#e1f3ec;border-radius:10px"></div>
<div class="t" style="left:1256px;top:943.47px;font-size:11.5px;color:#0f7a5f;font-weight:normal;-webkit-text-stroke:0.35px #0f7a5f;">Oui</div>
<div class="t" style="left:1353px;top:943.38px;font-size:12.9px;color:#222;font-weight:normal;">06/01/2024</div>
<svg style="left:0;top:0" width="1917" height="1028"><g transform="translate(1466.2,955.6) rotate(-43.4)">
<path d="M0 0 L4.2 -3 L4.2 3 Z" fill="#f2c9a0"/>
<path d="M0 0 L1.5 -1.1 L1.5 1.1 Z" fill="#6a3a6a"/>
<rect x="4.2" y="-3.1" width="8.4" height="6.2" fill="#f5822e"/>
<rect x="12.6" y="-3.1" width="1.7" height="6.2" fill="#d8d4f0"/>
<rect x="14.3" y="-3.2" width="3.6" height="6.4" rx="1" fill="#f04a3c"/>
</g></svg>
<div class="t" style="left:1527.6px;top:943.46px;font-size:12.8px;color:#222;font-weight:normal;">Matières premières</div>
<div class="t" style="left:1672px;top:943.46px;font-size:12.8px;color:#222;font-weight:normal;">MP</div>
<div class="t" style="left:1602.3px;width:400px;text-align:center;top:943.97px;font-size:12.2px;color:#222;font-weight:normal;">Pièce</div>
<div class="abs" style="left:314px;top:972px;width:1537px;height:46px;background:#fafafa;border-bottom:1px solid #ebebeb"></div>
<div class="t" style="left:326px;top:989.55px;font-size:12.7px;color:#222;font-weight:normal;">6</div>
<div class="t" style="left:374.6px;top:989.80px;font-size:12.4px;color:#222;font-weight:normal;">ART-0006</div>
<div class="t" style="left:493.8px;top:989.55px;font-size:12.7px;color:#222;font-weight:normal;">Moteur triphasé</div>
<div class="t" style="left:655.7px;top:989.51px;font-size:12.75px;color:#222;font-weight:normal;">Composant industriel de haute qualité</div>
<div class="t" style="left:772.2px;width:400px;text-align:center;top:989.55px;font-size:12.7px;color:#222;font-weight:normal;">1</div>
<div class="t" style="left:839.4000000000001px;width:400px;text-align:center;top:989.55px;font-size:12.7px;color:#222;font-weight:normal;">1</div>
<div class="t" style="left:893px;width:400px;text-align:center;top:989.55px;font-size:12.7px;color:#222;font-weight:normal;">1</div>
<div class="abs" style="left:1147px;top:985px;width:41px;height:19px;background:#e5f4ea;border-radius:10px"></div>
<div class="t" style="left:1155.75px;top:989.47px;font-size:11.5px;color:#1a8f47;font-weight:normal;-webkit-text-stroke:0.35px #1a8f47;">Actif</div>
<div class="abs" style="left:1248px;top:985px;width:34px;height:19px;background:#e1f3ec;border-radius:10px"></div>
<div class="t" style="left:1256px;top:989.47px;font-size:11.5px;color:#0f7a5f;font-weight:normal;-webkit-text-stroke:0.35px #0f7a5f;">Oui</div>
<div class="t" style="left:1353px;top:989.38px;font-size:12.9px;color:#222;font-weight:normal;">07/01/2024</div>
<svg style="left:0;top:0" width="1917" height="1028"><g transform="translate(1466.2,1001.6) rotate(-43.4)">
<path d="M0 0 L4.2 -3 L4.2 3 Z" fill="#f2c9a0"/>
<path d="M0 0 L1.5 -1.1 L1.5 1.1 Z" fill="#6a3a6a"/>
<rect x="4.2" y="-3.1" width="8.4" height="6.2" fill="#f5822e"/>
<rect x="12.6" y="-3.1" width="1.7" height="6.2" fill="#d8d4f0"/>
<rect x="14.3" y="-3.2" width="3.6" height="6.4" rx="1" fill="#f04a3c"/>
</g></svg>
<div class="t" style="left:1527.6px;top:989.46px;font-size:12.8px;color:#222;font-weight:normal;">Produits finis</div>
<div class="t" style="left:1672px;top:989.46px;font-size:12.8px;color:#222;font-weight:normal;">PF</div>
<div class="t" style="left:1602.3px;width:400px;text-align:center;top:989.97px;font-size:12.2px;color:#222;font-weight:normal;">Pièce</div>
<div class="abs" style="left:936px;top:597px;width:293px;height:145px;background:#fff;border:1px solid #767676"></div>
<div class="abs" style="left:937px;top:622px;width:291px;height:23.5px;background:#767676"></div>
<div class="t" style="left:945.3px;top:603.74px;font-size:12px;color:#111;font-weight:normal;">Sélectionner...</div>
<div class="t" style="left:945.3px;top:627.74px;font-size:12px;color:#fff;font-weight:normal;">Actif</div>
<div class="t" style="left:945.3px;top:651.74px;font-size:12px;color:#111;font-weight:normal;">Inactif</div>
<div class="t" style="left:945.3px;top:675.74px;font-size:12px;color:#111;font-weight:normal;">Suspendu</div>
<div class="t" style="left:945.3px;top:699.74px;font-size:12px;color:#111;font-weight:normal;">Archivé</div>
<div class="t" style="left:945.3px;top:723.74px;font-size:12px;color:#111;font-weight:normal;">En attente</div>
</body></html>
